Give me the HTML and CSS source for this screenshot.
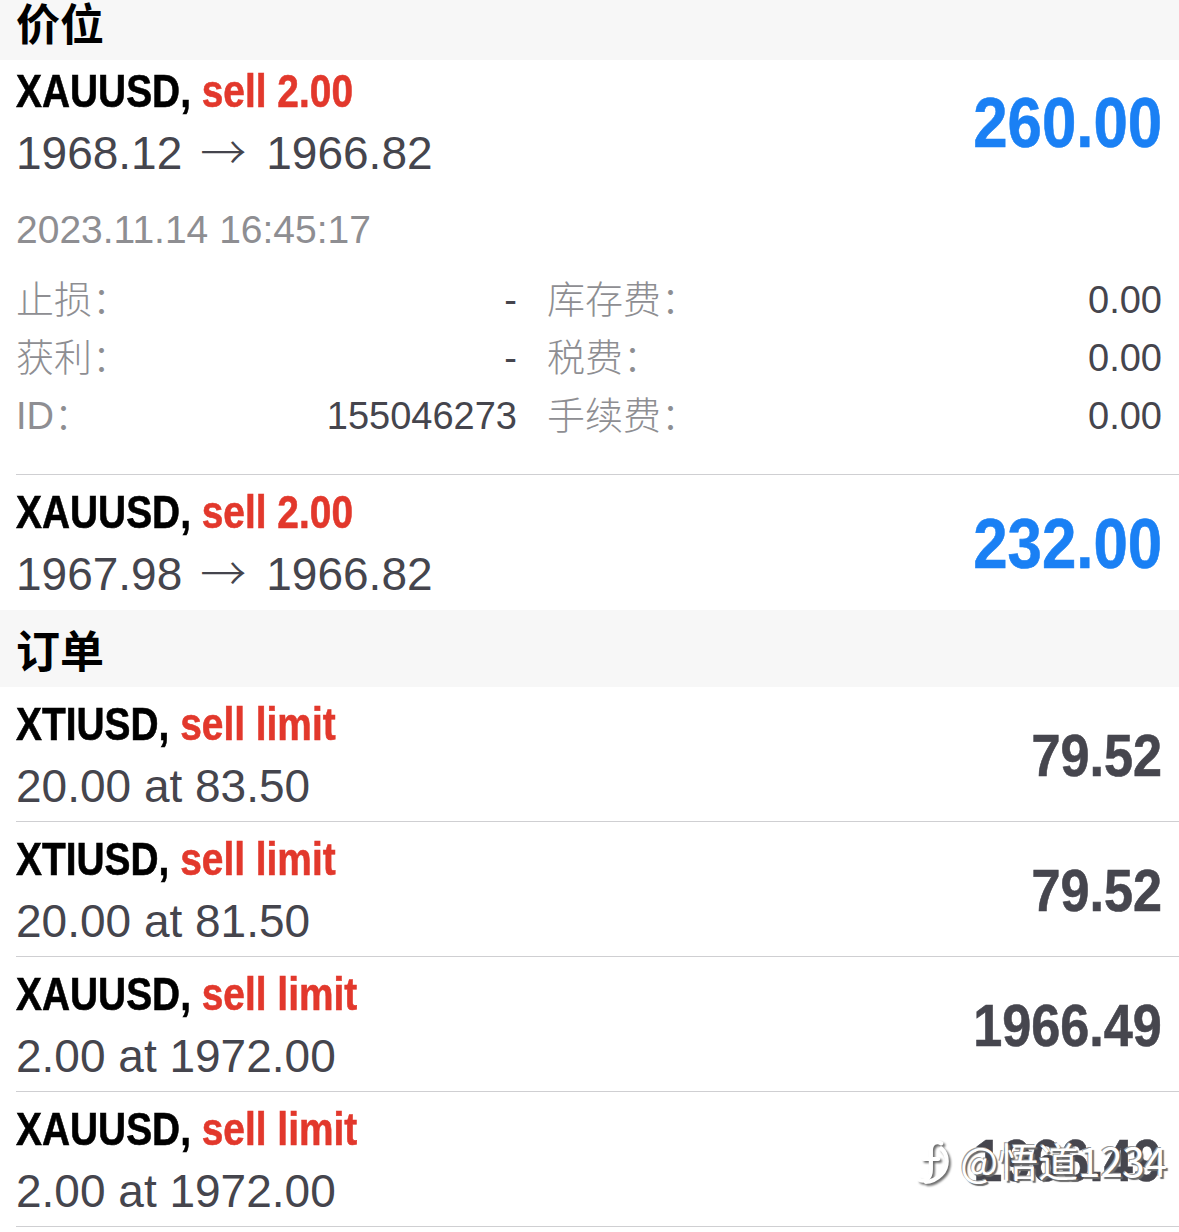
FILE: index.html
```html
<!DOCTYPE html>
<html lang="zh">

<head>
    <meta charset="UTF-8">
    <meta name="viewport" content="width=device-width, initial-scale=1.0">
    <title>交易</title>
    <link rel="stylesheet" href="styles.css">
</head>

<body>
    <div id="page">
        <div class="section-head">价位</div>

        <!-- open position, expanded -->
        <div class="row expanded">
            <div class="row-main">
                <div class="info">
                    <div class="title"><span class="narrow">XAUUSD, <span class="side">sell 2.00</span></span></div>
                    <div class="sub">1968.12<span class="arrow">→</span>1966.82</div>
                </div>
                <div class="profit"><span class="narrow">260.00</span></div>
            </div>
            <div class="time">2023.11.14 16:45:17</div>
            <div class="details">
                <div class="field"><span class="label">止损：</span><span class="value">-</span></div>
                <div class="field"><span class="label">库存费：</span><span class="value">0.00</span></div>
                <div class="field"><span class="label">获利：</span><span class="value">-</span></div>
                <div class="field"><span class="label">税费：</span><span class="value">0.00</span></div>
                <div class="field"><span class="label">ID：</span><span class="value">155046273</span></div>
                <div class="field"><span class="label">手续费：</span><span class="value">0.00</span></div>
            </div>
        </div>

        <div class="row last">
            <div class="row-main">
                <div class="info">
                    <div class="title"><span class="narrow">XAUUSD, <span class="side">sell 2.00</span></span></div>
                    <div class="sub">1967.98<span class="arrow">→</span>1966.82</div>
                </div>
                <div class="profit"><span class="narrow">232.00</span></div>
            </div>
        </div>

        <div class="section-head">订单</div>

        <div class="row">
            <div class="row-main">
                <div class="info">
                    <div class="title"><span class="narrow">XTIUSD, <span class="side">sell limit</span></span></div>
                    <div class="sub">20.00 at 83.50</div>
                </div>
                <div class="price"><span class="narrow">79.52</span></div>
            </div>
        </div>
        <div class="row">
            <div class="row-main">
                <div class="info">
                    <div class="title"><span class="narrow">XTIUSD, <span class="side">sell limit</span></span></div>
                    <div class="sub">20.00 at 81.50</div>
                </div>
                <div class="price"><span class="narrow">79.52</span></div>
            </div>
        </div>
        <div class="row">
            <div class="row-main">
                <div class="info">
                    <div class="title"><span class="narrow">XAUUSD, <span class="side">sell limit</span></span></div>
                    <div class="sub">2.00 at 1972.00</div>
                </div>
                <div class="price"><span class="narrow">1966.49</span></div>
            </div>
        </div>
        <div class="row">
            <div class="row-main">
                <div class="info">
                    <div class="title"><span class="narrow">XAUUSD, <span class="side">sell limit</span></span></div>
                    <div class="sub">2.00 at 1972.00</div>
                </div>
                <div class="price"><span class="narrow">1966.49</span></div>
            </div>
        </div>

        <!-- watermark on top of the last price -->
        <div id="mark">
            <svg width="36" height="52" viewBox="0 0 34 50">
                <path d="M3 44 C9 47 14 42 14 34 L14 16 C14 9 19 6 24 9" />
                <path d="M7 24 L21 24" />
                <path d="M24 14 C31 20 31 32 24 39 C20 43 14 46 9 46" />
            </svg>
            <span>@悟道1234</span>
        </div>
    </div>
</body>

</html>
```

FILE: styles.css
```css
html, body {
    margin: 0;
    background-color: #ffffff;
    font-family: "Liberation Sans", "Noto Sans CJK SC", sans-serif;
    color: #45454d;
    overflow: hidden;
}

#page {
    position: relative;
    margin-top: -17px;
}

.section-head {
    height: 77px;
    padding-left: 16px;
    display: flex;
    align-items: center;
    background-color: #f7f7f7;
    color: #000000;
    font-family: "Noto Sans CJK SC", sans-serif;
    font-weight: 700;
    font-size: 44px;
}

.row {
    margin-left: 16px;
    padding: 6px 17px 4px 0;
    border-bottom: 1px solid #cfcfd2;
}

.row.expanded {
    padding-top: 0;
    padding-bottom: 29px;
}

.row.last {
    border-bottom: none;
    padding-bottom: 5px;
}

.row-main {
    display: flex;
    justify-content: space-between;
    align-items: center;
}

.title, .sub {
    height: 62px;
    line-height: 62px;
    white-space: nowrap;
}

/* no condensed face installed, squeeze the bold one */
.narrow {
    display: inline-block;
    transform: scaleX(0.845);
    transform-origin: left center;
    -webkit-text-stroke: 0.6px currentColor;
}

.title {
    font-weight: 700;
    font-size: 46px;
    color: #000000;
}

.side {
    color: #e2382c;
}

.sub {
    font-size: 46px;
    color: #45454d;
}

.arrow {
    font-family: "Noto Sans CJK SC", sans-serif;
    font-weight: 300;
    line-height: 0;
    margin: 0 20px 0 18px;
}

.profit, .price {
    font-weight: 700;
}

.profit .narrow, .price .narrow {
    transform: scaleX(0.87);
    transform-origin: right center;
}

.profit {
    font-size: 71px;
    color: #1a80f4;
}

.price {
    font-size: 60px;
    color: #46464e;
}

.time {
    margin-top: 17px;
    line-height: 58px;
    font-size: 39px;
    color: #8e8e92;
}

.details {
    margin-top: 12px;
    display: grid;
    grid-template-columns: 501px 1fr;
    column-gap: 30px;
}

.field {
    height: 58px;
    display: flex;
    justify-content: space-between;
    align-items: baseline;
    line-height: 58px;
}

.label {
    font-weight: 300;
    font-size: 38px;
    color: #8e8e92;
}

.value {
    font-size: 38px;
    color: #45454d;
}

#mark {
    position: absolute;
    right: 12px;
    bottom: 38px;
    display: flex;
    align-items: center;
    gap: 8px;
    color: #ffffff;
    font-family: "Noto Sans CJK SC", sans-serif;
    font-size: 40px;
    text-shadow: 2px 2px 1px #6b6b6b, -1px -1px 0 #9a9a9a;
}

#mark svg {
    fill: none;
    stroke: #ffffff;
    stroke-width: 4;
    stroke-linecap: round;
    filter: drop-shadow(2px 2px 1px #6b6b6b);
}
```
